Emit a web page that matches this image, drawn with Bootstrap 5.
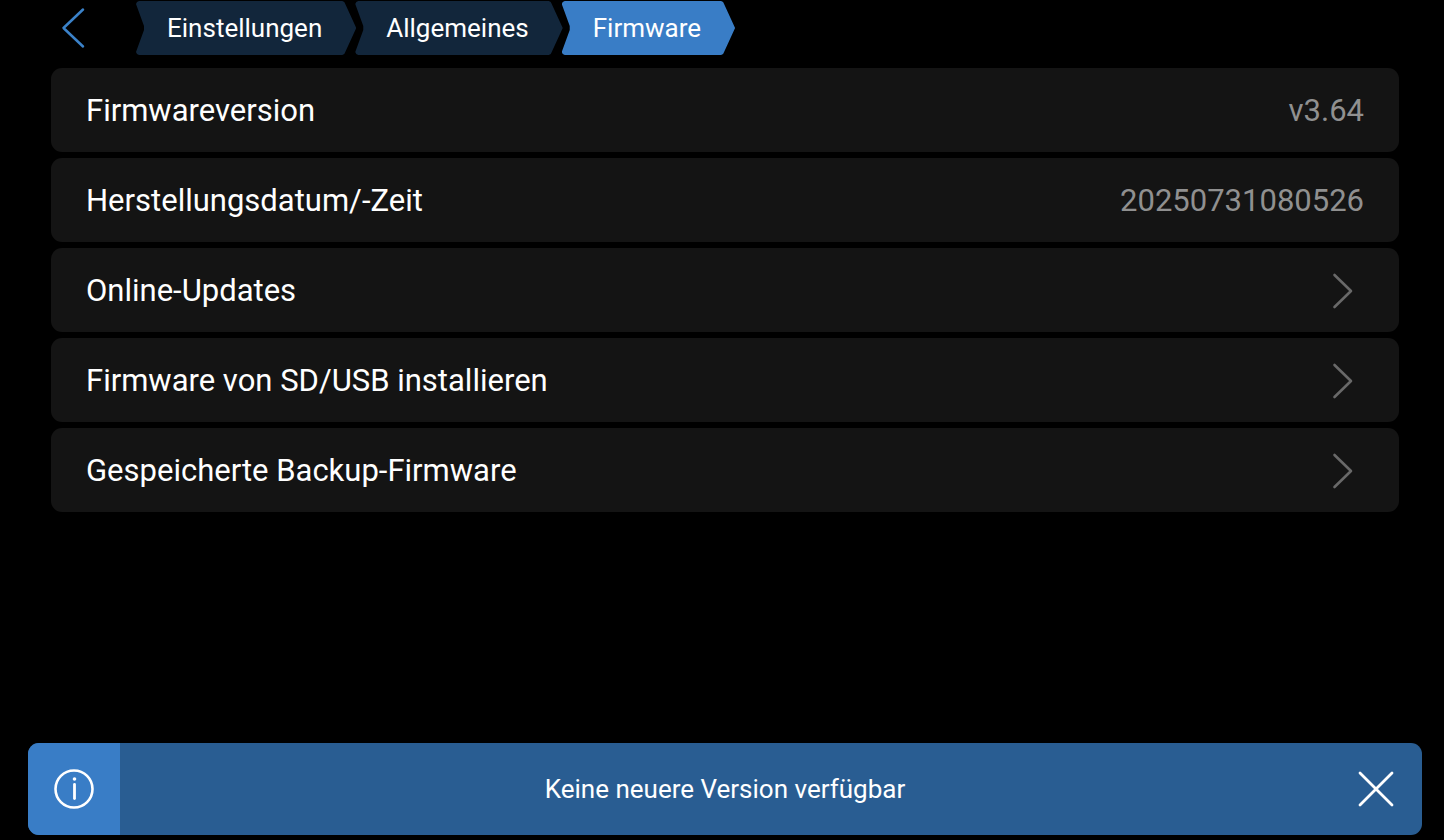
<!DOCTYPE html>
<html lang="de" data-bs-theme="dark">
<head>
<meta charset="utf-8">
<meta name="viewport" content="width=device-width, initial-scale=1">
<title>Firmware</title>
<link href="https://cdn.jsdelivr.net/npm/bootstrap@5.3.0/dist/css/bootstrap.min.css" rel="stylesheet">
<style>
  body { background: #000; color: #fff; font-family: Roboto, sans-serif; }
  .topbar { height: 68px; padding: 1px 45px 13px 51px; }
  .back { width: 44px; margin-right: 41px; color: #3b82c9; }
  .crumb {
    height: 54px; padding: 0 34px 0 31px; margin-right: -1px;
    font-size: 26px; background: #12263b; color: #fff;
    clip-path: polygon(0 3px, 1px 1px, 3px 0, calc(100% - 14px) 0, calc(100% - 12px) 1px, calc(100% - 11px) 3px, 100% 50%, calc(100% - 11px) calc(100% - 3px), calc(100% - 12px) calc(100% - 1px), calc(100% - 14px) 100%, 3px 100%, 1px calc(100% - 1px), 0 calc(100% - 3px), 8px calc(50% + 2px), 8px calc(50% - 2px));
  }
  .crumb.active { background: #397dc6; }
  .settings { gap: 6px; padding: 0 45px 24px 51px; }
  .setting {
    min-height: 84px; padding: 2px 35px 0; border: 0; border-radius: 11px !important;
    background: #141414; color: #fff; font-size: 31px; line-height: 40px;
  }
  .setting-value { color: #909090; }
  .chevron { margin-right: 9px; color: #696969; }
  .notice {
    min-height: 92px; margin: 0 22px 5px 28px; border-radius: 11px;
    background: #295d92; font-size: 26px;
  }
  .notice-side { width: 92px; }
  .notice-icon { background: #397dc6; }
</style>
</head>
<body class="d-flex flex-column min-vh-100">
  <header class="topbar d-flex align-items-center">
    <button type="button" class="back btn border-0 p-0 d-flex justify-content-center" aria-label="Zurück">
      <svg width="44" height="44" viewBox="0 0 44 44" fill="none" stroke="currentColor" stroke-width="2.5" stroke-linecap="round" stroke-linejoin="round"><path d="M32 3.500 12.500 22 32 40.500"/></svg>
    </button>
    <nav class="d-flex" aria-label="Pfad">
      <a href="#" class="crumb d-flex align-items-center text-decoration-none">Einstellungen</a>
      <a href="#" class="crumb d-flex align-items-center text-decoration-none">Allgemeines</a>
      <a href="#" class="crumb active d-flex align-items-center text-decoration-none" aria-current="page">Firmware</a>
    </nav>
  </header>

  <main class="settings list-group">
    <div class="setting list-group-item d-flex align-items-center justify-content-between">
      <span>Firmwareversion</span><span class="setting-value">v3.64</span>
    </div>
    <div class="setting list-group-item d-flex align-items-center justify-content-between">
      <span>Herstellungsdatum/-Zeit</span><span class="setting-value">20250731080526</span>
    </div>
    <a href="#" class="setting list-group-item d-flex align-items-center justify-content-between">
      <span>Online-Updates</span>
      <svg class="chevron" width="24" height="38" viewBox="0 0 24 38" fill="none" stroke="currentColor" stroke-width="2.600" stroke-linecap="round" stroke-linejoin="round" aria-hidden="true"><path d="M3.500 3 20 19 3.500 35"/></svg>
    </a>
    <a href="#" class="setting list-group-item d-flex align-items-center justify-content-between">
      <span>Firmware von SD/USB installieren</span>
      <svg class="chevron" width="24" height="38" viewBox="0 0 24 38" fill="none" stroke="currentColor" stroke-width="2.600" stroke-linecap="round" stroke-linejoin="round" aria-hidden="true"><path d="M3.500 3 20 19 3.500 35"/></svg>
    </a>
    <a href="#" class="setting list-group-item d-flex align-items-center justify-content-between">
      <span>Gespeicherte Backup-Firmware</span>
      <svg class="chevron" width="24" height="38" viewBox="0 0 24 38" fill="none" stroke="currentColor" stroke-width="2.600" stroke-linecap="round" stroke-linejoin="round" aria-hidden="true"><path d="M3.500 3 20 19 3.500 35"/></svg>
    </a>
  </main>

  <div class="notice d-flex align-items-stretch overflow-hidden mt-auto" role="status">
    <div class="notice-side notice-icon d-flex align-items-center justify-content-center">
      <svg width="40" height="40" viewBox="0 0 40 40" fill="none" stroke="#fff" aria-hidden="true"><circle cx="20" cy="20" r="18.500" stroke-width="2.600"/><path d="M20.500 15.500v14" stroke-width="2.800" stroke-linecap="round"/><circle cx="20.500" cy="10" r="1.800" fill="#fff" stroke="none"/></svg>
    </div>
    <div class="flex-fill d-flex align-items-center justify-content-center">Keine neuere Version verfügbar</div>
    <button type="button" class="notice-side btn border-0 p-0 d-flex align-items-center justify-content-center" aria-label="Schließen">
      <svg width="38" height="38" viewBox="0 0 38 38" fill="none" stroke="#fff" stroke-width="2.800" stroke-linecap="round" aria-hidden="true"><path d="M3 3 35 35M35 3 3 35"/></svg>
    </button>
  </div>
<script src="https://cdn.jsdelivr.net/npm/bootstrap@5.3.0/dist/js/bootstrap.bundle.min.js"></script>
</body>
</html>
